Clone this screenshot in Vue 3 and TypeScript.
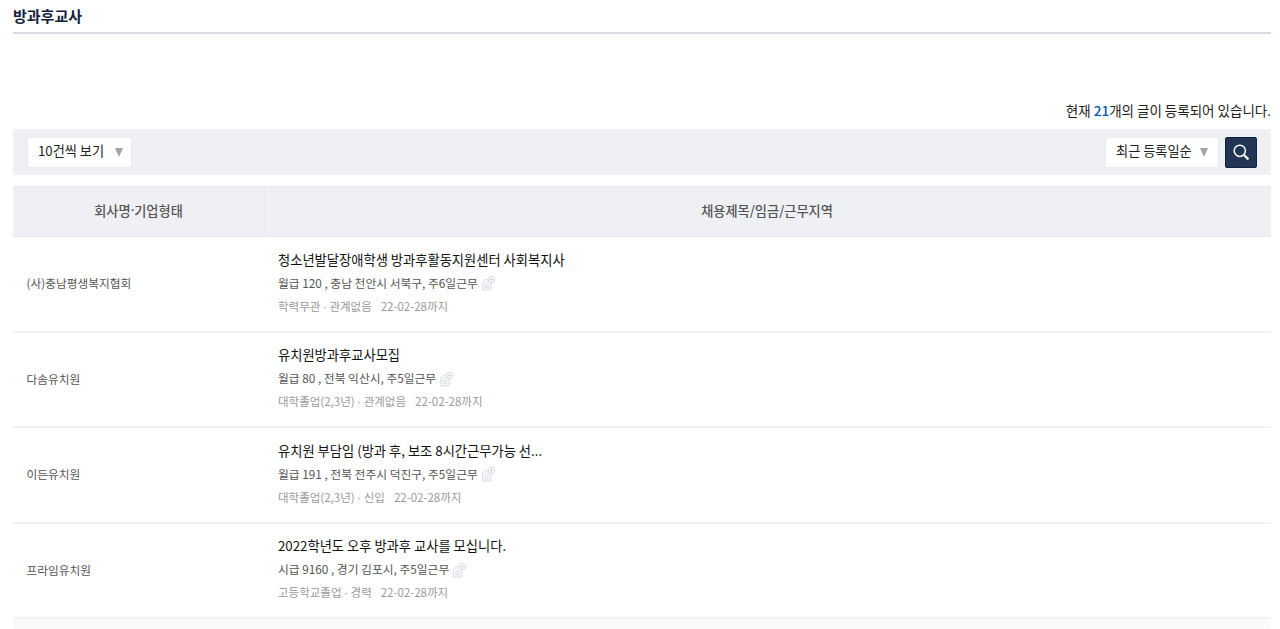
<script setup lang="ts">
interface Job { company: string; title: string; pay: string; edu: string; exp: string }
const jobs: Job[] = [
  { company: '(사)충남평생복지협회', title: '청소년발달장애학생 방과후활동지원센터 사회복지사', pay: '월급 120 , 충남 천안시 서북구, 주6일근무', edu: '학력무관', exp: '관계없음' },
  { company: '다솜유치원', title: '유치원방과후교사모집', pay: '월급 80 , 전북 익산시, 주5일근무', edu: '대학졸업(2,3년)', exp: '관계없음' },
  { company: '이든유치원', title: '유치원 부담임 (방과 후, 보조 8시간근무가능 선...', pay: '월급 191 , 전북 전주시 덕진구, 주5일근무', edu: '대학졸업(2,3년)', exp: '신입' },
  { company: '프라임유치원', title: '2022학년도 오후 방과후 교사를 모십니다.', pay: '시급 9160 , 경기 김포시, 주5일근무', edu: '고등학교졸업', exp: '경력' },
]
</script>

<template>
  <div class="page">
    <h2 class="heading">방과후교사</h2>
    <p class="count">현재 <span class="num">21</span>개의 글이 등록되어 있습니다.</p>
    <div class="filters">
      <div class="select size">10건씩 보기<span class="arrow"></span></div>
      <div class="right">
        <div class="select sort">최근 등록일순<span class="arrow"></span></div>
        <button class="search" aria-label="검색">
          <svg width="18" height="18" viewBox="0 0 18 18" fill="none" stroke="#fff">
            <circle cx="7.8" cy="7.8" r="5.6" stroke-width="1.5" />
            <path d="M12 12l4.4 4.4" stroke-width="2.2" />
          </svg>
        </button>
      </div>
    </div>
    <div class="thead">
      <div class="th c1">회사명<span class="dot">·</span>기업형태</div>
      <div class="th c2">채용제목/임금/근무지역</div>
    </div>
    <div v-for="j in jobs" :key="j.company" class="row">
      <div class="company">{{ j.company }}</div>
      <div class="info">
        <div class="title">{{ j.title }}</div>
        <div class="pay">
          {{ j.pay }}
          <svg class="clip" width="15" height="16" viewBox="0 0 15 16" fill="none">
            <path d="M1.500 7L4.500 4.500h5.500v10.500h-8.500z" fill="#f4f5f7" stroke="#dcdfe5" />
            <path d="M3.500 10h4.500M3.500 12.500h4.500" stroke="#dcdfe5" />
            <circle cx="10.500" cy="4.500" r="3.200" fill="#fff" stroke="#d3d6dd" />
            <path d="M8.800 4.500h3.400M10.500 2.800v3.400" stroke="#d3d6dd" />
          </svg>
        </div>
        <div class="cond">{{ j.edu }}<span class="sep"> · </span>{{ j.exp }}<span class="date">22-02-28까지</span></div>
      </div>
    </div>
    <div class="rest"></div>
  </div>
</template>

<style>
html, body { margin: 0; background: #fff; overflow: hidden; }
</style>

<style scoped>
.page {
  height: 629px;
  overflow: hidden;
  padding: 0 9px 0 13px;
  font-family: "Noto Sans CJK KR", "Noto Sans", sans-serif;
  color: #222;
}
.heading {
  margin: 0;
  height: 32px;
  line-height: 32px;
  font-size: 15px;
  font-weight: 700;
  color: #14213d;
  border-bottom: 2px solid #d8dbe4;
}
.count {
  margin: 0;
  padding-top: 66px;
  height: 29px;
  line-height: 20px;
  box-sizing: content-box;
  text-align: right;
  font-size: 13.5px;
  color: #222;
}
.num { color: #0059a8; font-weight: 500; }
.filters {
  height: 46px;
  background: #eff0f4;
  display: flex;
  align-items: center;
  justify-content: space-between;
  padding: 0 14px;
}
.right { display: flex; align-items: center; gap: 6px; }
.select {
  height: 31px;
  box-sizing: border-box;
  border: 1px solid #e9ebf0;
  background: #fff;
  font-size: 13.2px;
  padding-bottom: 3px;
  display: flex;
  align-items: center;
  justify-content: space-between;
  color: #222;
}
.size { width: 105px; padding-left: 10px; padding-right: 8px; }
.sort { width: 114px; padding-left: 10px; padding-right: 10px; }
.arrow {
  width: 0;
  height: 0;
  margin-top: 3px;
  border-left: 4.500px solid transparent;
  border-right: 4.500px solid transparent;
  border-top: 9px solid #a3a3a3;
}
.search {
  width: 32px;
  height: 31px;
  padding: 0;
  border: 1px solid #14213d;
  border-radius: 2px;
  background: #233554;
  display: flex;
  align-items: center;
  justify-content: center;
}
.thead {
  margin-top: 11px;
  height: 51px;
  box-sizing: border-box;
  display: flex;
  background: #eff0f4;
  border-top: 1px solid #e8eaf0;
  border-bottom: 1px solid #e8eaf0;
}
.th {
  display: flex;
  align-items: center;
  justify-content: center;
  padding-bottom: 3px;
  font-size: 13.2px;
  font-weight: 500;
  color: #555;
}
.dot { font-family: "Noto Sans", sans-serif; }
.c1 { width: 251px; border-right: 1px solid #e6e8ee; }
.c2 { flex: 1; padding-right: 2px; }
.row {
  height: 95.500px;
  box-sizing: border-box;
  padding-bottom: 2px;
  display: flex;
  align-items: center;
  border-bottom: 2px solid #f0f1f4;
}
.company {
  width: 265px;
  box-sizing: border-box;
  padding-left: 13.500px;
  font-size: 11.700px;
  color: #555;
}
.info { display: flex; flex-direction: column; }
.title { font-size: 13.270px; line-height: 23px; color: #111; }
.pay { font-size: 11.750px; line-height: 23px; color: #555; display: flex; align-items: center; gap: 3px; }
.clip { margin-top: 2px; }
.cond { margin-top: 1px; font-size: 11.500px; line-height: 23px; color: #999; }
.sep { font-family: "Noto Sans", sans-serif; }
.date { margin-left: 9px; }
.rest { height: 20px; background: #fafafb; }
</style>
